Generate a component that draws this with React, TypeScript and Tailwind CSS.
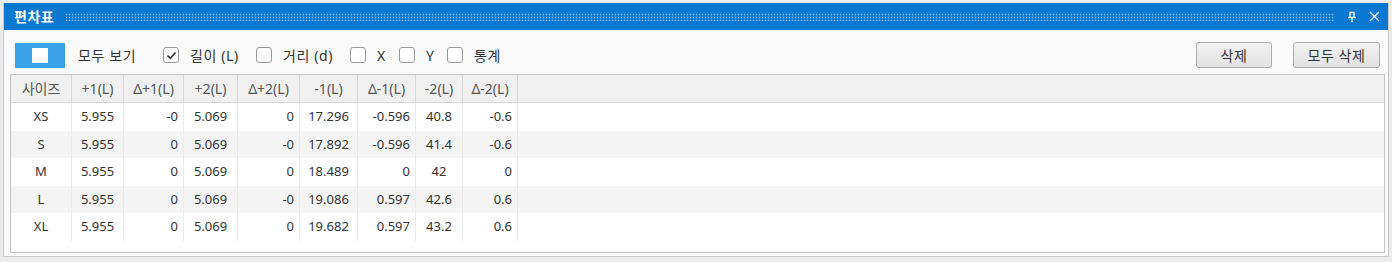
const columns = [
    { label: "사이즈", w: "w-[61px]", align: "center" },
    { label: "+1(L)", w: "w-[52px]", align: "center" },
    { label: "Δ+1(L)", w: "w-[60px]", align: "right" },
    { label: "+2(L)", w: "w-[54px]", align: "center" },
    { label: "Δ+2(L)", w: "w-[62px]", align: "right" },
    { label: "-1(L)", w: "w-[58px]", align: "center" },
    { label: "Δ-1(L)", w: "w-[58px]", align: "right" },
    { label: "-2(L)", w: "w-[47px]", align: "center" },
    { label: "Δ-2(L)", w: "w-[55px]", align: "right" },
];

const rows = [
    ["XS", "5.955", "-0", "5.069", "0", "17.296", "-0.596", "40.8", "-0.6"],
    ["S", "5.955", "0", "5.069", "-0", "17.892", "-0.596", "41.4", "-0.6"],
    ["M", "5.955", "0", "5.069", "0", "18.489", "0", "42", "0"],
    ["L", "5.955", "0", "5.069", "-0", "19.086", "0.597", "42.6", "0.6"],
    ["XL", "5.955", "0", "5.069", "0", "19.682", "0.597", "43.2", "0.6"],
];

const options = [
    { label: "길이 (L)", w: "w-[66px]", checked: true },
    { label: "거리 (d)", w: "w-[67px]" },
    { label: "X", w: "w-[22px]" },
    { label: "Y", w: "w-[21px]" },
    { label: "통계", w: "" },
];

function Checkbox({ checked }: { checked?: boolean }) {
    return (
        <span className="w-[16px] h-[16px] rounded-[3px] border border-[#9a9a9a] bg-white flex items-center justify-center shrink-0">
            {checked && (
                <svg width="11" height="11" viewBox="0 0 11 11">
                    <path d="M1.5 5.5 L4.3 8.3 L9.5 2.5" fill="none" stroke="#333" strokeWidth="1.6" />
                </svg>
            )}
        </span>
    );
}

export default function App() {
    return (
        <div className="w-[1392px] h-[262px] bg-[#ececec] pt-[3px] px-[3px] font-['Noto_Sans','Noto_Sans_CJK_KR',sans-serif] text-[13px] text-[#333]">
            <div className="flex flex-col h-[254px] border-x border-b border-[#c9c9c9] bg-[#fafafa]">
                {/* Title bar */}
                <div className="h-[27px] bg-[#0a78d0] flex items-center pl-[10px] pr-[8px] text-white">
                    <span className="font-['Noto_Sans_CJK_KR',sans-serif] font-bold text-[14px] tracking-[0.5px]">편차표</span>
                    <div className="flex-1 h-[8px] ml-[11px] mr-[12px] bg-[radial-gradient(circle,rgba(255,255,255,0.5)_0.7px,transparent_1.1px)] bg-[length:3px_3px]" />
                    <svg width="10" height="12" viewBox="0 0 10 12" className="mr-[12px]">
                        <path d="M3 1.5 H7 V6.5 H3 Z M1 6.5 H9 M5 6.5 V11" fill="none" stroke="white" strokeWidth="1.3" />
                    </svg>
                    <svg width="11" height="11" viewBox="0 0 11 11">
                        <path d="M1 1 L10 10 M10 1 L1 10" stroke="white" strokeWidth="1.3" />
                    </svg>
                </div>

                <div className="flex-1 flex flex-col pl-[6px] pr-[3px] pt-[12px] pb-[3px]">
                    {/* Toolbar */}
                    <div className="h-[26px] flex items-center pl-[5px] pr-[5px] text-[14px] tracking-[0.6px]">
                        <div className="w-[50px] h-[25px] bg-[#3ba2ea] flex items-center justify-center">
                            <div className="w-[16px] h-[15px] bg-white" />
                        </div>
                        <span className="ml-[13px] w-[85px]">모두 보기</span>
                        {options.map((o) => (
                            <label key={o.label} className="flex items-center">
                                <Checkbox checked={o.checked} />
                                <span className={`ml-[11px] ${o.w}`}>{o.label}</span>
                            </label>
                        ))}
                        <div className="flex-1" />
                        <button className="w-[76px] h-[26px] rounded-[3px] border border-[#adadad] bg-gradient-to-b from-[#f2f2f2] to-[#e2e2e2] text-[#333]">
                            삭제
                        </button>
                        <button className="ml-[21px] w-[87px] h-[26px] rounded-[3px] border border-[#adadad] bg-gradient-to-b from-[#f2f2f2] to-[#e2e2e2] text-[#333]">
                            모두 삭제
                        </button>
                    </div>

                    {/* Grid */}
                    <div className="mt-[6px] flex-1 border border-[#c4c4c4] bg-white flex flex-col">
                        <div className="h-[28px] flex bg-[#f0f0f0] border-b border-[#d4d4d4] text-[#555] text-[14px]">
                            {columns.map((c) => (
                                <div key={c.label} className={`${c.w} shrink-0 border-r border-[#d8d8d8] flex items-center justify-center`}>
                                    {c.label}
                                </div>
                            ))}
                            <div className="flex-1" />
                        </div>
                        {rows.map((r, i) => (
                            <div key={r[0]} className={`h-[27.5px] flex ${i % 2 === 1 ? "bg-[#f4f4f4]" : "bg-white"}`}>
                                {r.map((v, j) => (
                                    <div
                                        key={j}
                                        className={`${columns[j].w} shrink-0 border-r border-[#ebebeb] flex items-center ${
                                            columns[j].align === "right" ? "justify-end pr-[5px]" : "justify-center"
                                        }`}
                                    >
                                        {v}
                                    </div>
                                ))}
                                <div className="flex-1" />
                            </div>
                        ))}
                        <div className="flex-1" />
                    </div>
                </div>
            </div>
        </div>
    );
}
